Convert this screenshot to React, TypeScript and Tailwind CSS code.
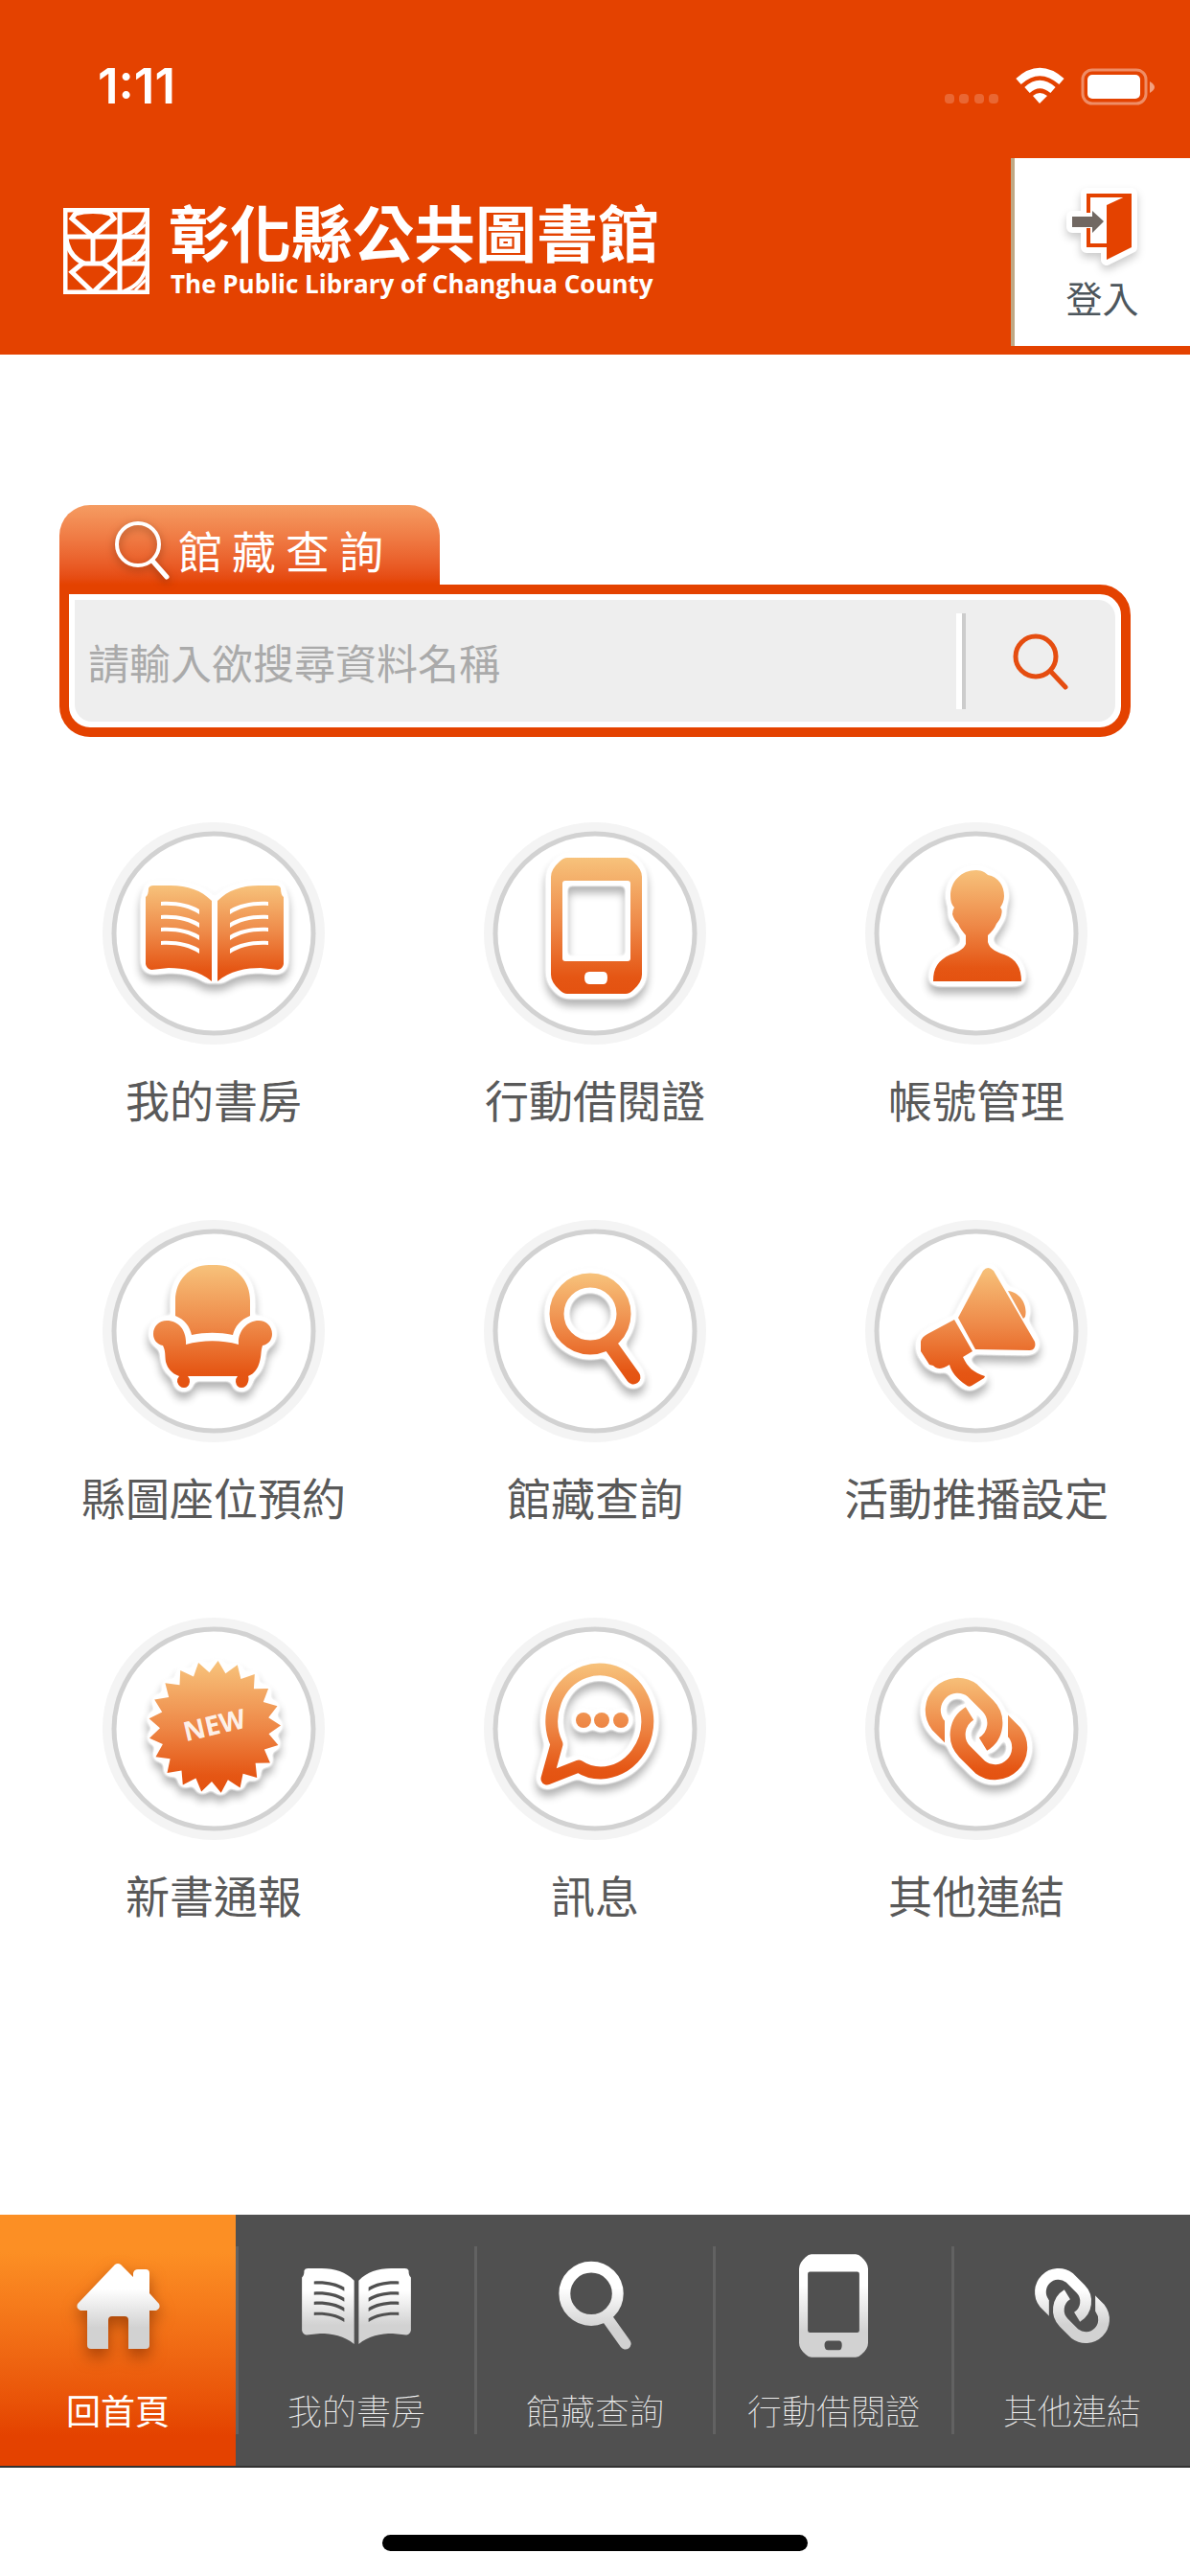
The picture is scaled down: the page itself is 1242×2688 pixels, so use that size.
import { useId, useState } from 'react';
import type { ReactNode } from 'react';

type IconName = 'book' | 'phone' | 'person' | 'chair' | 'search' | 'megaphone' | 'badge' | 'chat' | 'link';

interface Shape {
  // vertical range of the gradient
  top: number;
  bottom: number;
  draw: (paint: string) => ReactNode;
}

// 21-pointed star for the "NEW" badge
const starPoints = Array.from({ length: 42 }, (_, i) => {
  const angle = ((3 + (i * 360) / 42) * Math.PI) / 180;
  const radius = i % 2 === 0 ? 69 : 57;
  return `${(118 + radius * Math.sin(angle)).toFixed(1)},${(115 - radius * Math.cos(angle)).toFixed(1)}`;
}).join(' ');

// All shapes share a 234 x 234 canvas
const shapes: Record<IconName, Shape> = {
  book: {
    top: 67,
    bottom: 167,
    draw: (paint) => (
      <path
        fill={paint}
        fillRule="evenodd"
        d="M49 70Q50 67 54 67H72C90 67 104 72 115 83V167C102 156 86 153 70 153L52 155Q47 154 46 149V79Q49 77 49 70Z
           M187 70Q186 67 182 67H164C146 67 132 72 121 83V167C134 156 150 153 166 153L184 155Q189 154 190 149V79Q187 77 187 70Z
           M62 84C78 83 92 86 102 92V97C91 90 78 87 62 88Z M62 98C78 97 92 100 102 106V111C91 104 78 101 62 102Z
           M62 111C78 110 92 113 102 119V124C91 117 78 114 62 115Z M62 125C78 124 92 127 102 133V138C91 131 78 128 62 129Z
           M174 84C158 83 144 86 134 92V97C145 90 158 87 174 88Z M174 98C158 97 144 100 134 106V111C145 104 158 101 174 102Z
           M174 111C158 110 144 113 134 119V124C145 117 158 114 174 115Z M174 125C158 124 144 127 134 133V138C145 131 158 128 174 129Z"
      />
    ),
  },
  phone: {
    top: 38,
    bottom: 180,
    draw: (paint) => (
      <path
        fill={paint}
        fillRule="evenodd"
        d="M88 38H149Q153 38 157 42Q166 50 166 58V160Q166 168 157 176Q153 180 149 180H88Q84 180 80 176Q71 168 71 160V58Q71 50 80 42Q84 38 88 38Z
           M86 62Q83 62 83 65V143Q83 146 86 146H151Q154 146 154 143V65Q154 62 151 62Z
           M111 157Q106 157 106 163Q106 170 111 170H126Q130 170 130 163Q130 157 126 157Z"
      />
    ),
  },
  person: {
    top: 51,
    bottom: 167,
    draw: (paint) => (
      <path
        fill={paint}
        d="M117 51C123 51 127 54 129 56C140 58 146 67 146 78C146 83 144 87 142 90C144 92 144 94 143 98C142 102 140 104 138 107C136 112 133 115 129 119V126C131 134 140 137 146 139C159 144 164 153 164 167H72C72 153 77 145 90 139C96 137 104 134 106 128V119C103 115 100 112 98 107C95 104 93 101 92 97Q92 93 94 90C91 87 90 83 90 78C90 63 101 51 117 51Z"
      />
    ),
  },
  chair: {
    top: 48,
    bottom: 176,
    draw: (paint) => (
      <path
        fill={paint}
        d="M77 101V85C77 64 92 48 112 48H120C140 48 155 64 155 85V101C145 105 139 112 137 121C123 118 108 118 94 121C92 112 87 105 77 101Z
           M54 120C54 112 60 106 68 106C81 106 89 117 88 131C106 126 125 126 143 131C142 117 152 106 164 106C172 106 178 112 178 120C178 126 174 131 168 132C166 138 167 142 165 149C163 156 160 161 153 164Q154 166 153 170Q151 176 146 176Q141 176 140 170Q140 166 142 164H90Q92 166 92 170Q91 176 86 176Q81 176 79 170Q79 166 81 164C73 161 69 156 67 149C66 142 67 138 64 132C58 131 54 126 54 120Z"
      />
    ),
  },
  search: {
    top: 57,
    bottom: 173,
    draw: (paint) => (
      <>
        <circle cx="112" cy="99" r="35" fill="none" stroke={paint} strokeWidth="15" />
        <path d="M132 130L157 165" fill="none" stroke={paint} strokeWidth="15" strokeLinecap="round" />
      </>
    ),
  },
  megaphone: {
    top: 50,
    bottom: 175,
    draw: (paint) => (
      <path
        fill={paint}
        d="M98 103L124 54Q129 48 135 54L178 128Q180 136 173 137L116 136Z
           M150 75C162 76 171 89 168 102L166 104Z
           M94 105L113 138L103 144C108 155 114 160 126 164L125 166L112 174Q109 176 106 173C97 167 91 160 89 152C81 157 76 157 72 153L68 152L59 138V128Q60 123 66 120Z"
      />
    ),
  },
  badge: {
    top: 48,
    bottom: 182,
    draw: (paint) => <polygon points={starPoints} fill={paint} />,
  },
  chat: {
    top: 49,
    bottom: 175,
    draw: (paint) => (
      <>
        <path
          d="M77 133A50 54 0 1 1 123 163C114 163 106 160 100 156L67 169Z"
          fill="none"
          stroke={paint}
          strokeWidth="13"
          strokeLinejoin="round"
        />
        <circle cx="105" cy="108" r="8" fill={paint} />
        <circle cx="124" cy="108" r="8" fill={paint} />
        <circle cx="144" cy="108" r="8" fill={paint} />
      </>
    ),
  },
  link: {
    top: 61,
    bottom: 172,
    draw: (paint) => (
      <>
        <clipPath id="link-upper">
          <path clipRule="evenodd" d="M0 0H234V234H0Z M84 108H104V150H84Z" />
        </clipPath>
        <clipPath id="link-lower">
          <path clipRule="evenodd" d="M0 0H234V234H0Z M130 84H150V126H130Z" />
        </clipPath>
        <g fill="none" stroke={paint} strokeWidth="16">
          <path clipPath="url(#link-upper)" d="M94 130L77 113A25.7 25.7 0 0 1 113 77L129 93A25.7 25.7 0 0 1 124 133" />
          <path clipPath="url(#link-lower)" d="M140 104L157 121A25.7 25.7 0 0 1 121 157L105 141A25.7 25.7 0 0 1 110 101" />
        </g>
      </>
    ),
  },
};

function CircleIcon({ name }: { name: IconName }) {
  const id = useId();
  const shape = shapes[name];

  return (
    <svg viewBox="0 0 234 234" className="h-[234px] w-[234px]" aria-hidden="true">
      <defs>
        <linearGradient id={`${id}-fill`} gradientUnits="userSpaceOnUse" x1="0" x2="0" y1={shape.top} y2={shape.bottom}>
          <stop offset="0" stopColor="#f7c27b" />
          <stop offset="0.5" stopColor="#ee8847" />
          <stop offset="0.88" stopColor="#e55614" />
          <stop offset="1" stopColor="#e45210" />
        </linearGradient>
        {/* white sticker edge with a soft shadow under it */}
        <filter id={`${id}-edge`} filterUnits="userSpaceOnUse" x="0" y="0" width="234" height="234" colorInterpolationFilters="sRGB">
          <feGaussianBlur in="SourceAlpha" stdDeviation="4" />
          <feComponentTransfer result="grown">
            <feFuncA type="linear" slope="12" intercept="-0.5" />
          </feComponentTransfer>
          <feGaussianBlur in="grown" stdDeviation="4" />
          <feOffset dy="7" />
          <feComponentTransfer result="shadow">
            <feFuncA type="linear" slope="0.3" />
          </feComponentTransfer>
          <feFlood floodColor="#fff" />
          <feComposite in2="grown" operator="in" result="edge" />
          <feMerge>
            <feMergeNode in="shadow" />
            <feMergeNode in="edge" />
            <feMergeNode in="SourceGraphic" />
          </feMerge>
        </filter>
      </defs>
      <circle cx="117" cy="117" r="116" fill="#f4f4f4" />
      <circle cx="117" cy="117" r="104" fill="#fff" stroke="#d2d2d2" strokeWidth="5" />
      <g filter={`url(#${id}-edge)`}>{shape.draw(`url(#${id}-fill)`)}</g>
      {name === 'badge' && (
        <text
          x="118"
          y="123"
          transform="rotate(-13 118 114)"
          textAnchor="middle"
          fill="#fff"
          fillOpacity="0.9"
          fontFamily="'Noto Sans', sans-serif"
          fontWeight="700"
          fontSize="28"
        >
          NEW
        </text>
      )}
    </svg>
  );
}

interface NavIconProps {
  name: IconName;
  viewBox: string;
  className: string;
}

function NavIcon({ name, viewBox, className }: NavIconProps) {
  const id = useId();
  const shape = shapes[name];

  return (
    <svg viewBox={viewBox} className={className} aria-hidden="true">
      <linearGradient id={id} gradientUnits="userSpaceOnUse" x1="0" x2="0" y1={shape.top} y2={shape.bottom}>
        <stop offset="0.3" stopColor="#fff" />
        <stop offset="0.75" stopColor="#d2d2d2" />
      </linearGradient>
      {shape.draw(`url(#${id})`)}
    </svg>
  );
}

function HomeIcon() {
  return (
    <svg
      viewBox="0 0 87 89"
      className="h-[89px] w-[87px] overflow-visible drop-shadow-[0_8px_8px_rgba(120,40,0,0.6)]"
      aria-hidden="true"
    >
      <linearGradient id="home-fill" x1="0" x2="0" y1="0" y2="1">
        <stop offset="0.3" stopColor="#fff" />
        <stop offset="0.75" stopColor="#d2d2d2" />
      </linearGradient>
      <path
        fill="url(#home-fill)"
        d="M40 1Q43 -1 46 1L59 14V10Q60 6 64 6H72Q76 6 76 10V31L86 42Q88 47 83 49H76V85Q76 89 72 89H54V59Q54 55 50 55H37Q33 55 33 59V89H15Q11 89 11 85V49H4Q-1 47 1 42Z"
      />
    </svg>
  );
}

function LogoMark() {
  return (
    <svg viewBox="0 0 90 90" className="mt-[9px] h-[90px] w-[90px]" fill="none" stroke="#fff" strokeWidth="5" aria-hidden="true">
      <rect x="2" y="2" width="86" height="86" />
      <path d="M59 2V88M2 30H88M31 30V58M18 58H44M59 58H88" />
      <path d="M14 4L9 11L31 30L53 11L48 4" />
      <path d="M12 6Q31 1 50 6" />
      <path d="M3 31Q5 50 22 58M59 31Q57 50 40 58" />
      <path d="M20 58L9 67L31 88L53 67L42 58" />
      <path d="M87 4Q84 22 63 29M87 32Q84 50 63 57M87 60Q84 79 63 87" strokeWidth="4" />
      <path d="M75 27L86 17M75 55L86 45M75 86L86 75" strokeWidth="3" />
    </svg>
  );
}

function LoginIcon() {
  return (
    <svg
      viewBox="0 0 70 76"
      className="h-[76px] w-[70px] overflow-visible drop-shadow-[0_5px_4px_rgba(0,0,0,0.2)]"
      aria-hidden="true"
    >
      <path
        d="M18 4H65V60L39 73V60H18V45L24 39H3V28H18Z"
        fill="#fff"
        stroke="#fff"
        strokeWidth="12"
        strokeLinejoin="round"
      />
      <path d="M18 24V4H65V8H22V24ZM18 40H22V56H39V60H18Z" fill="#e44200" />
      <path d="M39 16L65 4V60L39 73Z" fill="#e44200" />
      <path d="M3 28H24V22L36 33L24 45V39H3Z" fill="#716862" />
    </svg>
  );
}

function StatusIcons() {
  return (
    <svg viewBox="0 0 220 40" className="h-[40px] w-[220px]" aria-hidden="true">
      <g fill="#fff" fillOpacity="0.2">
        <rect x="0" y="28" width="10" height="10" rx="4" />
        <rect x="15" y="28" width="10" height="10" rx="4" />
        <rect x="31" y="28" width="10" height="10" rx="4" />
        <rect x="46" y="28" width="10" height="10" rx="4" />
      </g>
      <g fill="none" stroke="#fff" strokeWidth="8">
        <path d="M77 15Q99 -5 122 15" />
        <path d="M86 24Q99 12 113 24" />
      </g>
      <path d="M92 30Q99 24 107 30L99 38Z" fill="#fff" />
      <rect x="144" y="3" width="66" height="35" rx="10" fill="none" stroke="#fff" strokeOpacity="0.4" strokeWidth="3" />
      <rect x="149" y="8" width="55" height="25" rx="5" fill="#fff" />
      <path d="M214 15Q219 18 219 21Q219 24 214 27Z" fill="#fff" fillOpacity="0.5" />
    </svg>
  );
}

const menuItems: { icon: IconName; label: string }[] = [
  { icon: 'book', label: '我的書房' },
  { icon: 'phone', label: '行動借閱證' },
  { icon: 'person', label: '帳號管理' },
  { icon: 'chair', label: '縣圖座位預約' },
  { icon: 'search', label: '館藏查詢' },
  { icon: 'megaphone', label: '活動推播設定' },
  { icon: 'badge', label: '新書通報' },
  { icon: 'chat', label: '訊息' },
  { icon: 'link', label: '其他連結' },
];

const navItems: { icon: IconName; label: string; viewBox: string; size: string }[] = [
  { icon: 'book', label: '我的書房', viewBox: '46 67 144 100', size: 'h-[79px] w-[114px]' },
  { icon: 'search', label: '館藏查詢', viewBox: '69 56 96 118', size: 'h-[94px] w-[76px]' },
  { icon: 'phone', label: '行動借閱證', viewBox: '71 38 95 142', size: 'h-[108px] w-[72px]' },
  { icon: 'link', label: '其他連結', viewBox: '61 61 112 112', size: 'h-[82px] w-[82px]' },
];

export default function App() {
  const [keyword, setKeyword] = useState('');

  return (
    <div className="flex min-h-screen flex-col bg-white font-['Noto_Sans_CJK_TC','Noto_Sans',sans-serif]">
      <header className="bg-[#e44200] text-white">
        <div className="flex h-[165px] items-start justify-between pt-[60px] pr-[36px] pl-[102px]">
          <span className="font-['Inter',sans-serif] text-[51px] leading-[60px] font-semibold">1:11</span>
          <div className="pt-[10px]">
            <StatusIcons />
          </div>
        </div>
        <div className="flex h-[205px] items-start justify-between">
          <a href="#home" className="flex items-start gap-[20px] pt-[43px] pl-[66px]">
            <LogoMark />
            <span className="flex flex-col gap-[6px]">
              <span className="text-[64px] leading-[64px] font-bold">彰化縣公共圖書館</span>
              <span className="pl-[2px] font-['Open_Sans',sans-serif] text-[26px] leading-[36px] font-bold">
                The Public Library of Changhua County
              </span>
            </span>
          </a>
          <button
            type="button"
            className="flex h-[196px] w-[187px] flex-col items-center border-l-4 border-[#bfa985] bg-white pt-[33px] text-[38px] leading-[48px] text-[#4d565c]"
          >
            <LoginIcon />
            <span className="mt-[12px]">登入</span>
          </button>
        </div>
      </header>

      <main className="flex-1 pt-[157px]">
        <form className="mx-[62px]" onSubmit={(e) => e.preventDefault()}>
          <label
            htmlFor="keyword"
            className="flex h-[83px] w-[397px] items-center rounded-t-[32px] bg-linear-to-b from-[#f59c62] to-[#e44200] pt-[8px] pl-[58px] text-[46px] leading-[60px] tracking-[10px] text-white"
          >
            <svg
              viewBox="0 0 60 64"
              className="h-[64px] w-[66px] overflow-visible drop-shadow-[0_3px_4px_rgba(90,30,0,0.5)]"
              fill="none"
              stroke="#fff"
              strokeWidth="4"
              strokeLinecap="round"
              aria-hidden="true"
            >
              <circle cx="21" cy="27" r="22" />
              <path d="M36 44L51 61" strokeWidth="5" />
            </svg>
            館藏查詢
          </label>
          <div className="rounded-[32px] rounded-tl-none border-[10px] border-[#e44200] bg-white p-[6px]">
            <div className="flex h-[127px] items-center rounded-[18px] rounded-tl-none bg-[#eee]">
              <input
                id="keyword"
                type="text"
                value={keyword}
                onChange={(e) => setKeyword(e.target.value)}
                placeholder="請輸入欲搜尋資料名稱"
                className="h-full min-w-0 flex-1 bg-transparent pl-[14px] text-[43px] text-[#555] outline-none placeholder:text-[#aaa]"
              />
              <span className="h-[100px] w-[10px] border-r-4 border-l-[6px] border-r-[#ccc] border-l-white" />
              <button type="submit" aria-label="搜尋" className="flex h-full w-[156px] items-center justify-center">
                <svg viewBox="0 0 60 60" className="h-[60px] w-[60px]" fill="none" stroke="#e54d10" strokeWidth="5" strokeLinecap="round">
                  <circle cx="25" cy="25" r="21" />
                  <path d="M41 41L56 57" />
                </svg>
              </button>
            </div>
          </div>
        </form>

        <ul className="mx-[24px] mt-[88px] grid grid-cols-3 gap-y-[94px]">
          {menuItems.map((item) => (
            <li key={item.icon}>
              <a href={`#${item.icon}`} className="flex flex-col items-center text-[46px] leading-[60px] text-[#595959]">
                <CircleIcon name={item.icon} />
                <span className="mt-[25px] mb-[2px]">{item.label}</span>
              </a>
            </li>
          ))}
        </ul>
      </main>

      <nav className="flex h-[264px] border-b-2 border-[#333] bg-[#505050] text-[36px] leading-[48px] text-white">
        <a
          href="#home"
          className="flex w-[246px] flex-col items-center bg-linear-to-b from-[#fc8f24] from-15% to-[#e44200] to-88% pt-[33px]"
        >
          <span className="flex h-[124px] items-center">
            <HomeIcon />
          </span>
          <span className="mt-[22px]">回首頁</span>
        </a>
        {navItems.map((item) => (
          <a
            key={item.icon}
            href={`#${item.icon}`}
            className="my-[33px] flex flex-1 flex-col items-center border-l-[3px] border-[#626262] font-thin text-[#eee]"
          >
            <span className="flex h-[124px] items-center">
              <NavIcon name={item.icon} viewBox={item.viewBox} className={item.size} />
            </span>
            <span className="mt-[22px]">{item.label}</span>
          </a>
        ))}
      </nav>

      {/* Home indicator */}
      <div className="flex h-[113px] items-end justify-center pb-[26px]">
        <div className="h-[17px] w-[444px] rounded-full bg-black" />
      </div>
    </div>
  );
}
